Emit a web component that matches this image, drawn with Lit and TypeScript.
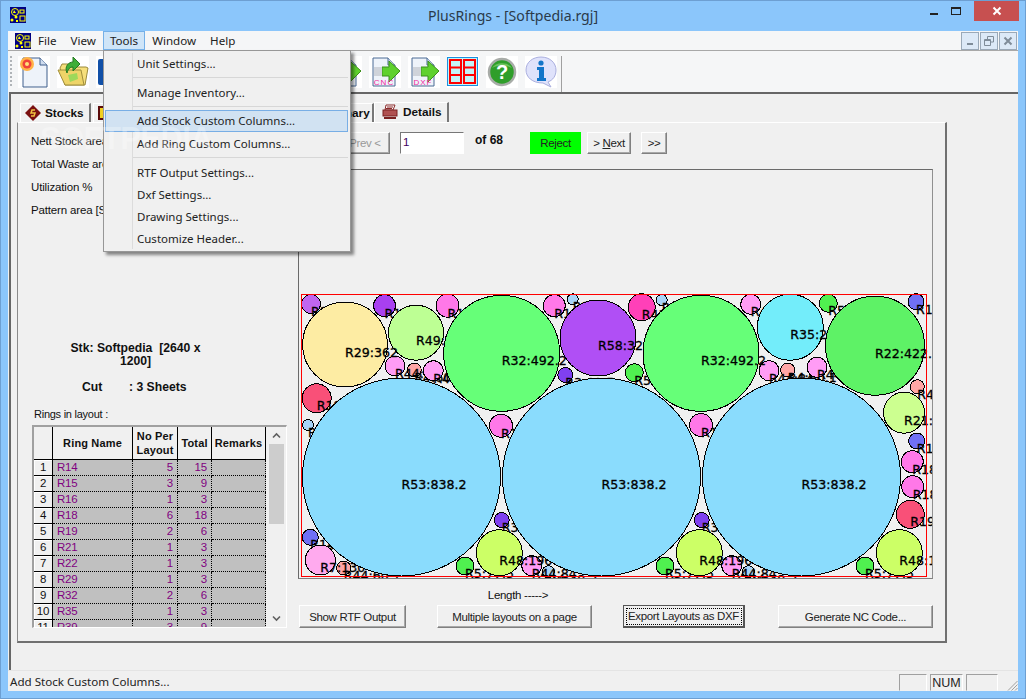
import { LitElement, html, css, svg } from "lit";
import { customElement } from "lit/decorators.js";

const UI = `"Noto Sans", "Open Sans", sans-serif`;

// cx, cy, r, colour, label. Painted small to large so big rings cover the small labels
const RINGS: [number, number, number, string, string][] = [
  [401.5, 477, 99, "#8adcfd", "R53:838.2"],
  [601.5, 477, 99, "#8adcfd", "R53:838.2"],
  [801.5, 477, 99, "#8adcfd", "R53:838.2"],
  [501.7, 353.3, 58, "#66ff78", "R32:492.2"],
  [701, 353.3, 58, "#66ff78", "R32:492.2"],
  [875, 345.7, 49.5, "#5ef266", "R22:422.2"],
  [345, 344.5, 42.5, "#fdeca3", "R29:362"],
  [598, 338, 38, "#b04ff5", "R58:324"],
  [790.3, 327.3, 33, "#73edfa", "R35:282"],
  [416, 332.7, 27.5, "#bdff94", "R49:235"],
  [499.3, 552.7, 23, "#ccff66", "R48:196"],
  [699.3, 552.7, 23, "#ccff66", "R48:196"],
  [899.3, 552.7, 23, "#ccff66", "R48:196"],
  [904, 412.7, 20.5, "#ccff90", "R21:175"],
  [320.3, 560, 15, "#ffaaee", "R7:130"],
  [316.7, 398.3, 14.5, "#f95078", "R19:124"],
  [910.3, 514.3, 14, "#f95078", "R19:124"],
  [641.7, 307.3, 13.5, "#ff40b8", "R41:115"],
  [501, 425.7, 11.5, "#ff78e8", "R18:98"],
  [701, 425, 11.5, "#ff78e8", "R18:98"],
  [447.5, 305.7, 11.5, "#ff78e8", "R18:98"],
  [554.3, 305.7, 11, "#ff78e8", "R18:98"],
  [912.3, 461.7, 11, "#ff78e8", "R18:98"],
  [912.7, 486.7, 11, "#ff78e8", "R18:98"],
  [384.5, 305.7, 11, "#a840f0", "R15:94"],
  [395, 366, 10, "#ff9cf5", "R44:84"],
  [433.3, 370.7, 10, "#ff9cf5", "R44:84"],
  [750.7, 304.3, 10, "#ff9cf5", "R44:84"],
  [769, 370.7, 10, "#ff9cf5", "R44:84"],
  [817, 367.3, 10, "#ff9cf5", "R44:84"],
  [531.7, 565.7, 10, "#ff9cf5", "R44:84"],
  [731.7, 565.7, 10, "#ff9cf5", "R44:84"],
  [311, 304, 9.5, "#c066f0", "R16:80"],
  [828.3, 303.3, 9, "#50f050", "R5:77"],
  [634.3, 372.7, 9, "#50f050", "R5:77"],
  [465, 566, 9, "#50f050", "R5:77.5"],
  [665, 566, 9, "#50f050", "R5:77.5"],
  [865, 566, 9, "#50f050", "R5:77.5"],
  [916, 301.7, 8, "#7070f5", "R14:68"],
  [916.7, 441, 8, "#7070f5", "R14:68"],
  [310.3, 537.3, 8, "#7070f5", "R14:68"],
  [565.3, 375, 7.5, "#8040f0", "R3:62.5"],
  [501.7, 520, 7.5, "#8040f0", "R3:62.5"],
  [701.7, 520, 7.5, "#8040f0", "R3:62.5"],
  [414.3, 370, 7, "#ffa5a5", "R4:60.1"],
  [787.7, 370, 7, "#ffa5a5", "R4:60.1"],
  [917.3, 386.7, 7, "#ffa5a5", "R4:60.1"],
  [343.7, 568, 7, "#ffa5a5", "R44:60.1"],
  [548.3, 571.7, 6, "#a8d4f8", "R4:48.2"],
  [748.3, 571.7, 6, "#a8d4f8", "R4:48.2"],
  [572.7, 299.3, 5.5, "#a8d4f8", "R1:42"],
  [661.7, 300, 5.5, "#a8d4f8", "R1:42"],
  [308, 425, 5.5, "#a8d4f8", "R1:42"],
];

const TABLE_ROWS: [string, number, number][] = [
  ["R14", 5, 15],
  ["R15", 3, 9],
  ["R16", 1, 3],
  ["R18", 6, 18],
  ["R19", 2, 6],
  ["R21", 1, 3],
  ["R22", 1, 3],
  ["R29", 1, 3],
  ["R32", 2, 6],
  ["R35", 1, 3],
  ["R39", 3, 9],
];

const appIcon = html`<svg width="16" height="16" viewBox="0 0 16 16">
  <rect width="16" height="16" fill="#000080" />
  <circle cx="5" cy="5" r="3.5" fill="none" stroke="#ff0" />
  <path d="M4 3l2 3H3z" fill="#ff0" />
  <rect x="10" y="3" width="4" height="3" fill="none" stroke="#ff0" />
  <rect x="10" y="9" width="5" height="5" fill="none" stroke="#ff0" />
  <circle cx="6" cy="10" r="1.5" fill="#ff0" />
  <circle cx="2" cy="13" r="1.5" fill="#ff0" />
  <rect x="6" y="13" width="2" height="2" fill="#ff0" />
</svg>`;

const page = svg`<path d="M4 2h15l7 7v21H4z" fill="#eef3fa" stroke="#4a6a94" />
  <path d="M19 2v7h7" fill="#cfdcee" stroke="#4a6a94" />`;

const arrow = svg`<path d="M13 11h7V5l11 10-11 11v-6h-7z" fill="#5fd12e" stroke="#3d8f1c" />
  <rect x="5" y="11" width="8" height="9" fill="#cfd3da" />`;

const docIcon = (label: string) => html`<svg width="32" height="32" viewBox="0 0 32 32">
  ${page}${arrow}
  ${label
    ? svg`<text x="15" y="29" text-anchor="middle" font-family="Liberation Sans" font-size="8" fill="#f0269a" letter-spacing="1">${label}</text>`
    : ""}
</svg>`;

const ICONS = [
  html`<svg width="32" height="32" viewBox="0 0 32 32">
    <path d="M5 2h17l7 7v22H5z" fill="#eef3fa" stroke="#3f5f8c" />
    <path d="M22 2v7h7" fill="#cfdcee" stroke="#3f5f8c" />
    <circle cx="9" cy="8" r="7" fill="#ffb347" />
    <circle cx="9" cy="8" r="4.5" fill="#f0433a" />
    <circle cx="9" cy="8" r="2" fill="#ffe27a" />
  </svg>`,
  html`<svg width="32" height="32" viewBox="0 0 32 32">
    <path d="M3 12l2-4h8l2 3h14l2 1-3 17H8z" fill="#f6df7c" stroke="#9a8a3a" />
    <path d="M1 14h23l3 15H8z" fill="#eed468" stroke="#a08e3c" />
    <path d="M10 17c-3-7 2-11 6-11V1l7 7-7 7v-4c-3 0-5 2-6 6z" fill="#3fae38" stroke="#257a22" />
    <path d="M11 19l9-2 1 6-8 3z" fill="#9ed85a" />
  </svg>`,
  html`<svg width="32" height="32" viewBox="0 0 32 32">
    <rect x="2" y="3" width="28" height="26" rx="2" fill="#1150a8" />
    <rect x="8" y="5" width="16" height="10" fill="#e8eef8" />
    <rect x="9" y="19" width="14" height="10" fill="#9bb8de" />
  </svg>`,
  docIcon(""),
  docIcon(""),
  docIcon(""),
  docIcon(""),
  docIcon(""),
  docIcon(""),
  docIcon("CNC"),
  docIcon("DXF"),
  html`<svg width="32" height="32" viewBox="0 0 32 32">
    <rect x=".5" y="1.5" width="30" height="28" fill="#c4f4f8" stroke="#1a8fe0" />
    <g fill="none" stroke="#f00" stroke-width="2">
      <rect x="3" y="4" width="11" height="23" />
      <rect x="17" y="4" width="11" height="23" />
      <path d="M3 11.5h11M3 19h11M17 11.5h11M17 19h11" />
    </g>
  </svg>`,
  html`<svg width="32" height="32" viewBox="0 0 32 32">
    <circle cx="16" cy="16" r="13" fill="#2f9e2a" stroke="#a8aca8" stroke-width="2.5" />
    <path d="M6 12a11 8 0 0 1 20 0c-5-3-15-3-20 0z" fill="#6cc35c" />
    <text x="16" y="23" text-anchor="middle" font-family="Liberation Sans" font-weight="700" font-size="20" fill="#fff">?</text>
  </svg>`,
  html`<svg width="32" height="32" viewBox="0 0 32 32">
    <path d="M16 1c9 0 15 6 15 13 0 6-3 10-8 12l3 5-8-4C7 27 1 21 1 14 1 6 8 1 16 1z" fill="#dfe2fb" stroke="#a9aede" />
    <circle cx="16" cy="7" r="2.6" fill="#1275c9" />
    <path d="M12 11h7v11h2v3H12v-3h2v-8h-2z" fill="#1275c9" />
  </svg>`,
];

const uiFont = css([UI] as unknown as TemplateStringsArray);

@customElement("app-root")
export class AppRoot extends LitElement {
  static styles = css`
    :host {
      display: block;
      width: 1026px;
      height: 699px;
      background: #8bc6fb;
      box-shadow: inset 0 0 0 1px #6d9fd2;
      font-family: "Liberation Sans", Arial, sans-serif;
      font-size: 11.5px;
      color: #111;
      position: relative;
      overflow: hidden;
    }
    .title {
      height: 31px;
      display: flex;
      align-items: center;
      justify-content: center;
      position: relative;
      font-family: ${uiFont};
      font-size: 14.1px;
      color: #2a3a4a;
      padding-bottom: 1px;
      box-sizing: border-box;
    }
    .title .app { position: absolute; left: 10px; top: 7px; display: flex; }
    .caps { position: absolute; right: 7px; top: 1px; display: flex; align-items: flex-start; }
    .cap { width: 22px; height: 20px; display: flex; align-items: center; justify-content: center; }
    .cap.close { width: 45px; background: #c75050; margin-left: 7px; }
    .client {
      margin: 0 8px;
      height: 660px;
      display: flex;
      flex-direction: column;
      background: #f0f0f0;
    }
    .menubar {
      height: 19px;
      background: #f5f6f7;
      display: flex;
      align-items: center;
      padding-left: 7px;
      font-family: ${uiFont};
      font-size: 11.6px;
      color: #222;
      flex: none;
    }
    .menubar .sys { display: flex; }
    .mi { height: 19px; display: flex; align-items: center; padding: 0 7px; box-sizing: border-box; }
    .mi.on { background: #cfe5f8; border: 1px solid #75b0e8; padding: 0 6px; }
    .mdi-btns { margin-left: auto; display: flex; gap: 1px; padding-right: 1px; }
    .mdi-btn {
      width: 18px;
      height: 18px;
      box-sizing: border-box;
      border: 1px solid #9aa9b8;
      background: #dce9f7;
      display: flex;
      align-items: center;
      justify-content: center;
    }
    .toolbar {
      height: 42px;
      flex: none;
      box-sizing: border-box;
      background: #f5f6f7;
      border-top: 1px solid #a8a8a8;
      display: flex;
      align-items: flex-start;
      padding: 5px 0 0 2px;
    }
    .grip { width: 2px; height: 30px; margin-right: 6px; background: repeating-linear-gradient(#b0b4b8 0 2px, transparent 2px 4px); }
    .tools { display: flex; gap: 7px; padding-right: 4px; border-right: 1px solid #a0a0a0; height: 37px; }
    .tools div { width: 32px; height: 32px; background: #fff; display: flex; }
    .mdi {
      flex: 1;
      min-height: 0;
      border-top: 2px solid #666;
      border-left: 2px solid #666;
      margin-left: 1px;
      background: #f0f0f0;
      padding: 8px 0 0 6px;
      box-sizing: border-box;
    }
    .tabs { display: flex; height: 20px; padding-left: 3px; align-items: flex-end; }
    .tab {
      height: 19px;
      box-sizing: border-box;
      border: 1px solid #fff;
      border-right: 2px solid #777;
      border-bottom: none;
      font-weight: 700;
      font-size: 11.8px;
      display: flex;
      align-items: center;
      gap: 4px;
      padding: 0 0 1px 4px;
      background: #f0f0f0;
    }
    .tab.stocks { width: 71px; margin-right: 2px; }
    .tab.layouts { width: 198px; }
    .tab.summary { width: 83px; padding-left: 24px; }
    .tab.details { width: 75px; height: 20px; padding: 0 0 2px 7px; gap: 5px; }
    .panel {
      width: 930px;
      height: 521px;
      box-sizing: border-box;
      border: 1px solid #8a8a8a;
      border-top-color: #fff;
      border-right: 2px solid #707070;
      border-bottom: 2px solid #707070;
      display: flex;
    }
    .left { width: 280px; flex: none; padding-left: 13px; box-sizing: border-box; }
    .stats { padding-top: 7px; letter-spacing: -0.15px; }
    .stats div { height: 23px; line-height: 23px; white-space: nowrap; }
    .stk { width: 209px; margin-top: 120px; text-align: center; font-weight: 700; font-size: 12.2px; line-height: 13px; }
    .cut { margin-top: 13px; padding-left: 51px; font-weight: 700; font-size: 12.2px; line-height: 13px; }
    .cut span { display: inline-block; width: 47px; }
    .rings-label { margin: 14px 0 0 3px; line-height: 13px; font-size: 11px; letter-spacing: -0.25px; }
    .grid {
      width: 255px;
      height: 203px;
      margin: 4px 0 0 1px;
      box-sizing: border-box;
      border-top: 2px solid #a0a0a0;
      border-left: 2px solid #a0a0a0;
      border-bottom: 1px solid #fff;
      border-right: 1px solid #fff;
      display: flex;
      overflow: hidden;
    }
    .cells { width: 232px; flex: none; overflow: hidden; }
    table { border-collapse: separate; border-spacing: 0; table-layout: fixed; width: 232px; font-size: 11.5px; letter-spacing: -0.2px; }
    th {
      height: 33px;
      padding: 0;
      box-sizing: border-box;
      background: #f0f0f0;
      border-right: 1px solid #000;
      border-bottom: 1px solid #000;
      font-size: 11px;
      line-height: 14px;
      font-weight: 700;
      letter-spacing: 0.15px;
    }
    td {
      height: 16px;
      padding: 0 4px;
      box-sizing: border-box;
      background: #c0c0c0;
      color: #800080;
      border-right: 1px dotted #000;
      border-bottom: 1px dotted #000;
      text-align: right;
      line-height: 15px;
    }
    td.name { text-align: left; }
    td.num {
      background: #f0f0f0;
      color: #111;
      text-align: center;
      padding: 0;
      border-right: 1px solid #000;
      border-bottom: 1px solid #000;
      box-shadow: inset 1px 1px #fff;
    }
    .scroll {
      flex: 1;
      background: #f0f0f0;
      display: flex;
      flex-direction: column;
      align-items: center;
    }
    .scroll .arrow { height: 17px; display: flex; align-items: center; flex: none; }
    .scroll .thumb { width: 15px; height: 80px; background: #cdcdcd; flex: none; }
    .scroll .rest { flex: 1; }
    .right { flex: 1; min-width: 0; display: flex; flex-direction: column; }
    .nav { display: flex; align-items: flex-start; height: 22px; margin-top: 9px; padding-left: 3px; }
    button {
      font: inherit;
      font-size: 11.5px;
      letter-spacing: -0.35px;
      color: #222;
      height: 22px;
      padding: 0;
      box-sizing: border-box;
      background: #f0f0f0;
      border: 1px solid;
      border-color: #fff #808080 #808080 #fff;
      box-shadow: inset -1px -1px #a8a8a8;
      white-space: nowrap;
    }
    .first { width: 36px; margin-right: 3px; }
    .prev { width: 50px; margin-right: 10px; color: #999; }
    .page-input {
      width: 64px;
      height: 22px;
      box-sizing: border-box;
      background: #fff;
      border: 1px solid;
      border-color: #777 #fff #fff #777;
      padding: 3px 0 0 2px;
      color: #400060;
      margin-right: 11px;
    }
    .of { width: 55px; font-weight: 700; font-size: 12px; line-height: 17px; }
    .reject { width: 51px; background: #00ff00; border: none; box-shadow: none; margin-right: 6px; }
    .next { width: 44px; margin-right: 10px; }
    .last { width: 26px; }
    u { text-underline-offset: 1px; }
    .frame {
      width: 635px;
      height: 410px;
      box-sizing: border-box;
      margin-top: 15px;
      border: 1px solid #6a6a6a;
      border-bottom-color: #808080;
      border-right-color: #909090;
      flex: none;
      background: #f0f0f0;
    }
    .frame svg { display: block; }
    .length { text-align: center; margin-top: 9px; height: 14px; line-height: 14px; width: 440px; letter-spacing: -0.3px; }
    .actions { display: flex; margin-top: 3px; padding-left: 1px; }
    .actions button { height: 23px; }
    .b1 { width: 107px; margin-right: 31px; }
    .b2 { width: 155px; margin-right: 31px; }
    .b3 {
      width: 122px;
      margin-right: 33px;
      border: 1px solid #555 !important;
      border-bottom-width: 2px !important;
      border-right-width: 2px !important;
      outline: 1px dotted #000;
      outline-offset: -4px;
      box-shadow: none;
    }
    .b4 { width: 155px; }
    .status {
      height: 21px;
      flex: none;
      box-sizing: border-box;
      border-top: 1px solid #e4e4e4;
      display: flex;
      align-items: center;
      background: #f0f0f0;
      padding-left: 2px;
      font-family: ${uiFont};
      font-size: 11.6px;
      color: #222;
    }
    .status .msg { flex: 1; }
    .pane {
      height: 17px;
      margin-top: 3px;
      margin-right: 3px;
      box-sizing: border-box;
      border: 1px solid;
      border-color: #a0a0a0 #fff #f0f0f0 #a0a0a0;
      font-family: "Liberation Sans", sans-serif;
      font-size: 12.5px;
      line-height: 16px;
      text-align: center;
    }
    .p1 { width: 28px; }
    .p2 { width: 33px; }
    .p3 { width: 32px; margin-right: 9px; }
    .sizegrip { width: 11px; height: 11px; margin-top: 8px; flex: none; display: flex; }
    .menu {
      position: absolute;
      left: 103px;
      top: 50px;
      width: 248px;
      height: 202px;
      box-sizing: border-box;
      background: #f0f0f0;
      border: 1px solid #979797;
      box-shadow: 3px 3px 3px rgba(0, 0, 0, 0.45);
      padding-top: 1px;
      font-family: ${uiFont};
      font-size: 11.5px;
      color: #222;
    }
    .menu::before {
      content: "";
      position: absolute;
      left: 28px;
      top: 2px;
      bottom: 2px;
      width: 1px;
      background: #dcdcdc;
    }
    .item { height: 22px; line-height: 23px; padding-left: 32px; box-sizing: border-box; margin: 0 2px 0 1px; position: relative; }
    .item.on { background: #d1e2f2; border: 1px solid #78aee5; line-height: 20px; padding-left: 31px; height: 21.5px; }
    .sep { height: 7px; display: flex; align-items: center; padding-left: 29px; }
    .sep::after { content: ""; flex: 1; height: 1px; background: #d7d7d7; margin-right: 2px; }
    .watermark {
      position: absolute;
      left: 40px;
      top: 121px;
      font-family: "Liberation Sans", sans-serif;
      font-weight: 700;
      font-size: 31px;
      letter-spacing: -0.6px;
      color: rgba(255, 255, 255, 0.28);
      pointer-events: none;
    }
  `;

  private rings() {
    const sorted = [...RINGS].sort((a, b) => a[2] - b[2]);
    return sorted.map(
      ([cx, cy, r, fill, label]) => svg`
        <circle cx=${cx} cy=${cy} r=${r} fill=${fill} stroke="#000" shape-rendering="crispEdges" />
        <text x=${cx} y=${cy + 12} font-family="DejaVu Sans" font-size="12.6" fill="#000" stroke="#000" stroke-width=".3">${label}</text>`
    );
  }

  render() {
    return html`
      <div class="title">
        <span class="app">${appIcon}</span>
        PlusRings - [Softpedia.rgj]
        <div class="caps">
          <div class="cap">
            <svg width="10" height="10" viewBox="0 0 10 10"><rect x="1" y="7" width="8" height="2" fill="#222" /></svg>
          </div>
          <div class="cap">
            <svg width="12" height="10" viewBox="0 0 12 10"><rect x="1.5" y="1.5" width="9" height="7" fill="none" stroke="#222" /><rect x="1" y="1" width="10" height="2" fill="#222" /></svg>
          </div>
          <div class="cap close">
            <svg width="10" height="10" viewBox="0 0 10 10"><path d="M1.5 1.5l7 7M8.5 1.5l-7 7" stroke="#fff" stroke-width="2" /></svg>
          </div>
        </div>
      </div>
      <div class="client">
        <div class="menubar">
          <span class="sys">${appIcon}</span>
          <span class="mi">File</span>
          <span class="mi">View</span>
          <span class="mi on">Tools</span>
          <span class="mi">Window</span>
          <span class="mi">Help</span>
          <div class="mdi-btns">
            <div class="mdi-btn"><svg width="10" height="10" viewBox="0 0 10 10"><rect x="2" y="7" width="6" height="2" fill="#7f8c99" /></svg></div>
            <div class="mdi-btn"><svg width="10" height="10" viewBox="0 0 10 10"><path d="M3.5 3V.5h6V6H7M.5 3.5h6v6h-6zM.5 4.5h6" fill="none" stroke="#7f8c99" /></svg></div>
            <div class="mdi-btn"><svg width="10" height="10" viewBox="0 0 10 10"><path d="M1.5 1.5l7 7M8.5 1.5l-7 7" stroke="#7f8c99" stroke-width="2" /></svg></div>
          </div>
        </div>
        <div class="toolbar">
          <span class="grip"></span>
          <div class="tools">${ICONS.map((i) => html`<div>${i}</div>`)}</div>
        </div>
        <div class="mdi">
          <div class="tabs">
            <div class="tab stocks">
              <svg width="16" height="16" viewBox="0 0 16 16"><path d="M8 0l8 8-8 8-8-8z" fill="#7a1010" /><path d="M10 5H7L6 8h4l-1 3H6" fill="none" stroke="#f0c040" stroke-width="1.5" /></svg>
              Stocks
            </div>
            <div class="tab layouts">
              <svg width="14" height="14" viewBox="0 0 14 14"><rect x="1" y="1" width="12" height="12" fill="#f0d020" stroke="#5a0a0a" stroke-width="2" /></svg>
              Layouts
            </div>
            <div class="tab summary">Summary</div>
            <div class="tab details">
              <svg width="16" height="16" viewBox="0 0 16 16"><path d="M4 1h9l-2 5H3z" fill="#fff" stroke="#8b2a2a" /><rect x="1" y="6" width="14" height="6" fill="#b05050" stroke="#7a2020" /><path d="M2 13h12v2H2z" fill="#7a2020" /><path d="M5 3h6M4 4.5h6" stroke="#8b2a2a" /></svg>
              Details
            </div>
          </div>
          <div class="panel">
            <div class="left">
              <div class="stats">
                <div>Nett Stock area [Sq.mm]</div>
                <div>Total Waste area [Sq.mm]</div>
                <div>Utilization %</div>
                <div>Pattern area [Sq.mm]</div>
              </div>
              <div class="stk">Stk: Softpedia &nbsp;[2640 x<br />1200]</div>
              <div class="cut"><span>Cut</span>: 3 Sheets</div>
              <div class="rings-label">Rings in layout :</div>
              <div class="grid">
                <div class="cells">
                  <table>
                    <colgroup>
                      <col style="width:19px" /><col style="width:80px" /><col style="width:45px" /><col style="width:34px" /><col style="width:54px" />
                    </colgroup>
                    <thead>
                      <tr><th></th><th>Ring Name</th><th>No Per Layout</th><th>Total</th><th>Remarks</th></tr>
                    </thead>
                    <tbody>
                      ${TABLE_ROWS.map(
                        ([name, per, total], i) => html`<tr>
                          <td class="num">${i + 1}</td>
                          <td class="name">${name}</td>
                          <td>${per}</td>
                          <td>${total}</td>
                          <td></td>
                        </tr>`
                      )}
                    </tbody>
                  </table>
                </div>
                <div class="scroll">
                  <div class="arrow"><svg width="9" height="7" viewBox="0 0 9 7"><path d="M1 5.5l3.5-3.5L8 5.5" fill="none" stroke="#606060" stroke-width="1.6" /></svg></div>
                  <div class="thumb"></div>
                  <div class="rest"></div>
                  <div class="arrow"><svg width="9" height="7" viewBox="0 0 9 7"><path d="M1 1.5L4.5 5 8 1.5" fill="none" stroke="#606060" stroke-width="1.6" /></svg></div>
                </div>
              </div>
            </div>
            <div class="right">
              <div class="nav">
                <button class="first">&lt;&lt;</button>
                <button class="prev">Prev &lt;</button>
                <div class="page-input">1</div>
                <div class="of">of 68</div>
                <button class="reject">Reject</button>
                <button class="next">&gt; <u>N</u>ext</button>
                <button class="last">&gt;&gt;</button>
              </div>
              <div class="frame">
                <svg width="633" height="408" viewBox="299 170 633 408">
                  ${this.rings()}
                  <path d="M301.5 294.5h625v282h-625z" fill="none" stroke="#f00" shape-rendering="crispEdges" />
                </svg>
              </div>
              <div class="length">Length -----&gt;</div>
              <div class="actions">
                <button class="b1">Show RTF Output</button>
                <button class="b2">Multiple layouts on a page</button>
                <button class="b3">Export Layouts as DXF</button>
                <button class="b4">Generate NC Code...</button>
              </div>
            </div>
          </div>
        </div>
        <div class="status">
          <span class="msg">Add Stock Custom Columns...</span>
          <span class="pane p1"></span>
          <span class="pane p2">NUM</span>
          <span class="pane p3"></span>
          <span class="sizegrip"><svg width="11" height="11" viewBox="0 0 11 11"><path d="M10.5 1L1 10.5M10.5 4.5L4.5 10.5M10.5 8L8 10.5" stroke="#a0a0a0" /></svg></span>
        </div>
      </div>
      <div class="menu">
        <div class="item">Unit Settings...</div>
        <div class="sep"></div>
        <div class="item">Manage Inventory...</div>
        <div class="sep"></div>
        <div class="item on">Add Stock Custom Columns...</div>
        <div class="item">Add Ring Custom Columns...</div>
        <div class="sep"></div>
        <div class="item">RTF Output Settings...</div>
        <div class="item">Dxf Settings...</div>
        <div class="item">Drawing Settings...</div>
        <div class="item">Customize Header...</div>
      </div>
      <div class="watermark">SOFTPEDIA</div>
    `;
  }
}
